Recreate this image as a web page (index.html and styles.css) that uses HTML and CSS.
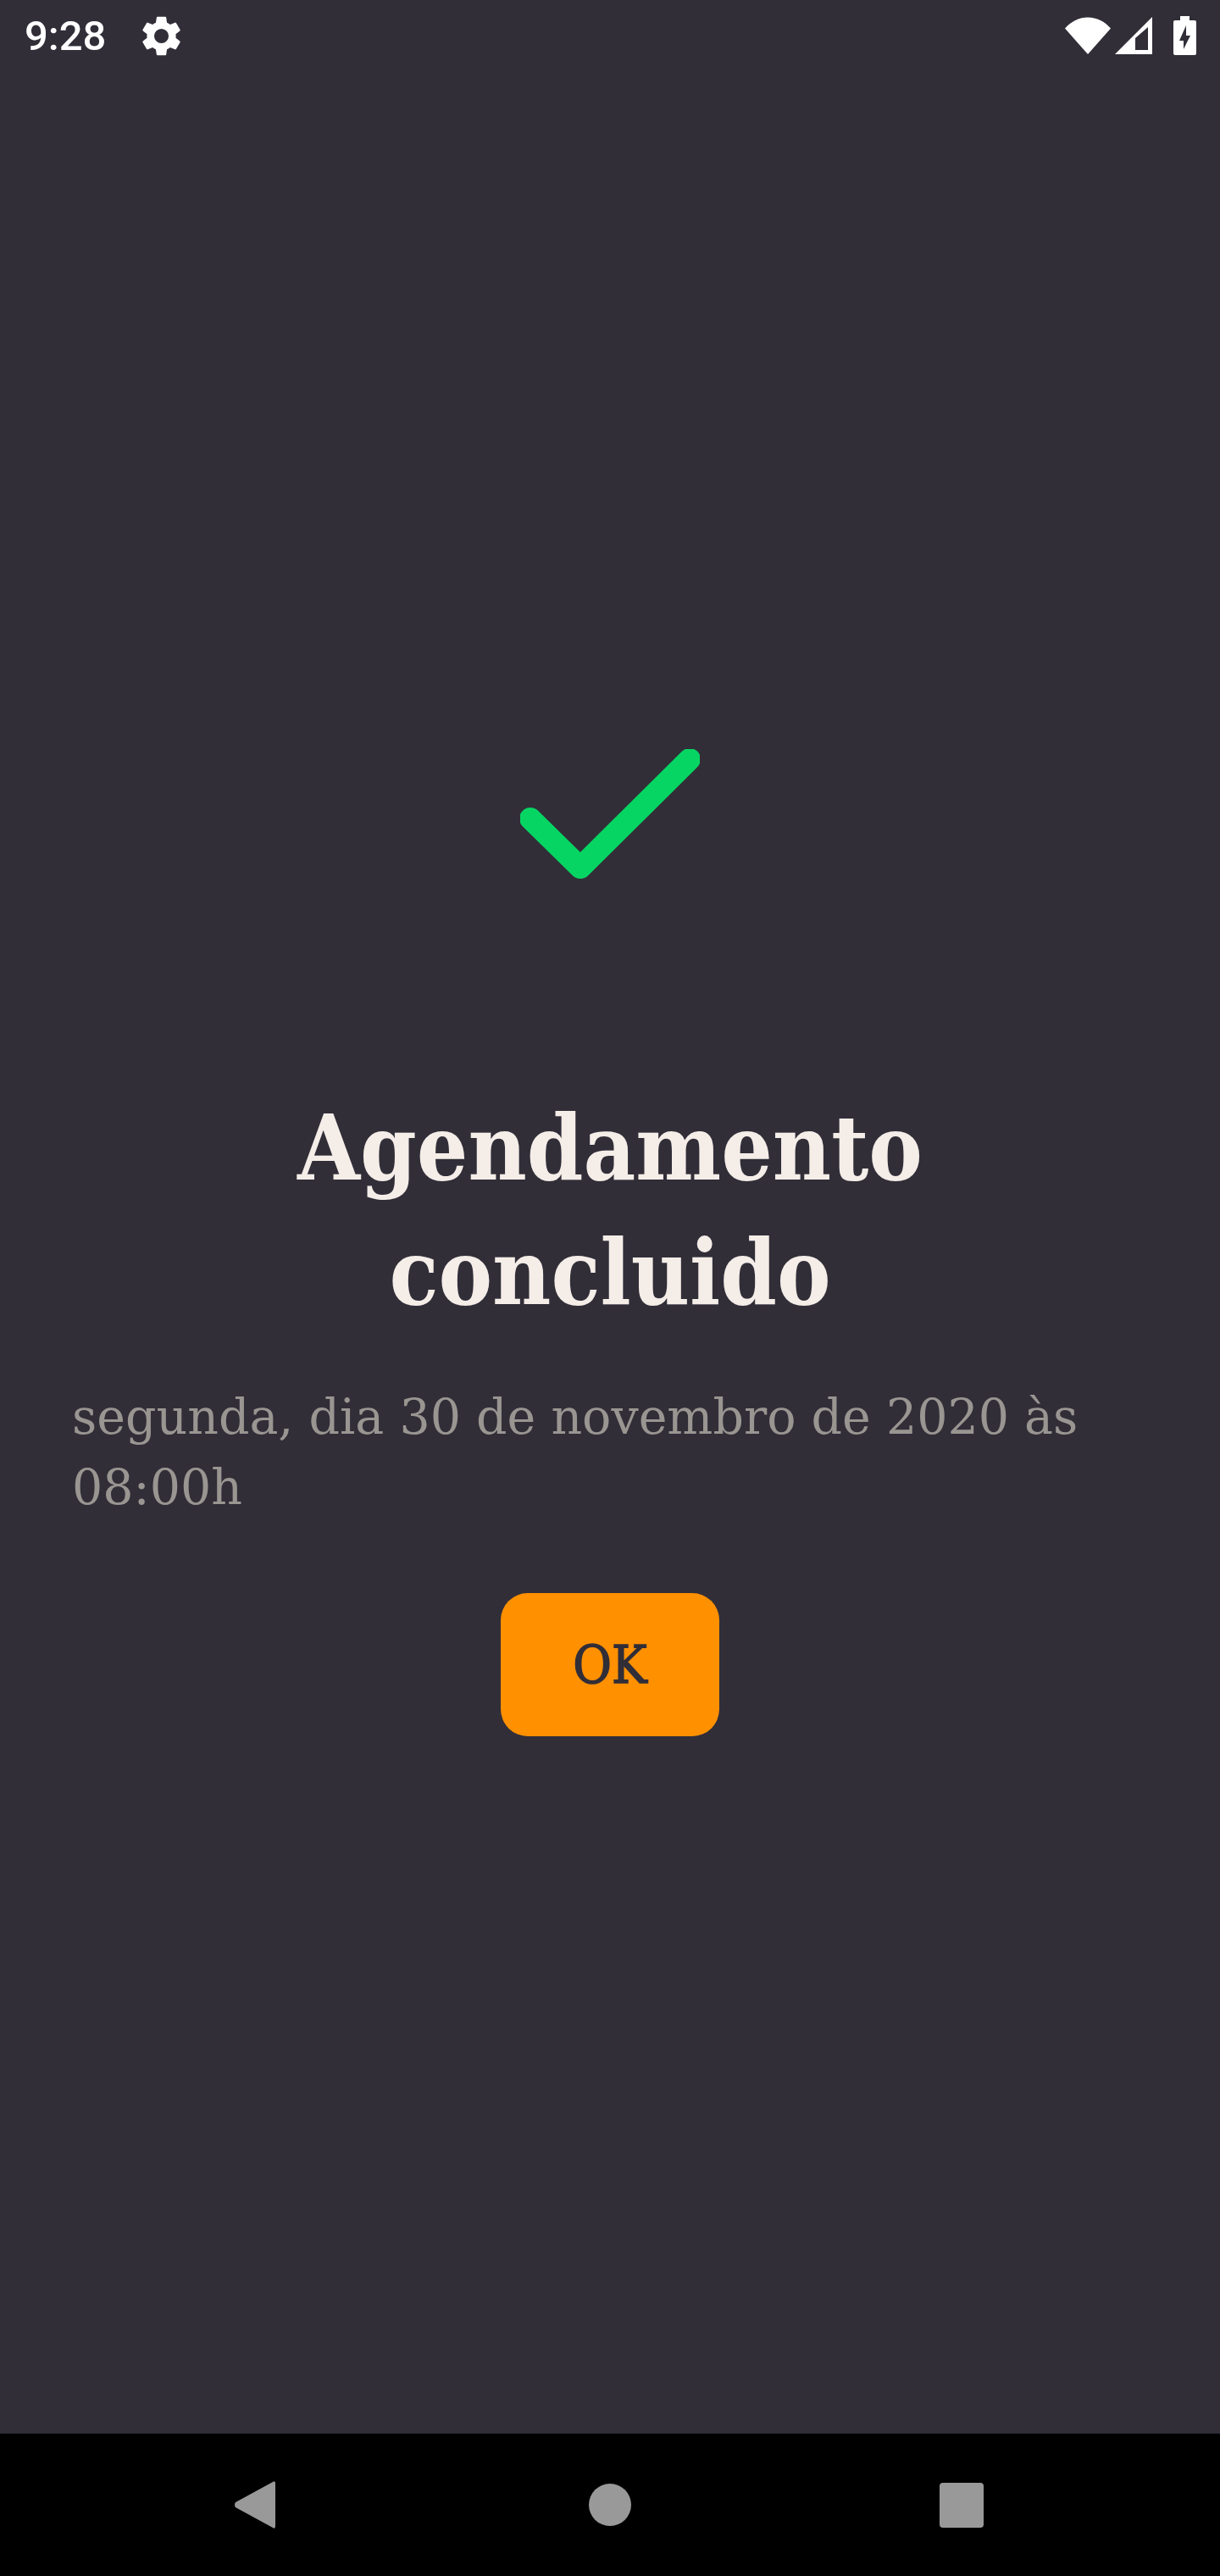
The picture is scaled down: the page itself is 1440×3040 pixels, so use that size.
FILE: index.html
```html
<!DOCTYPE html>
<html lang="pt-BR">
<head>
    <meta charset="UTF-8">
    <meta name="viewport" content="width=device-width, initial-scale=1.0">
    <title>Agendamento concluido</title>
    <link rel="stylesheet" href="styles.css">
</head>
<body>
    <div class="screen">
        <header class="status-bar">
            <div class="status-left">
                <span class="clock">9:28</span>
                <svg class="gear" viewBox="0 0 24 24"><path d="M19.14 12.94c.04-.3.06-.61.06-.94s-.02-.64-.07-.94l2.03-1.58a.49.49 0 0 0 .12-.61l-1.92-3.32a.49.49 0 0 0-.59-.22l-2.39.96a7 7 0 0 0-1.62-.94l-.36-2.54a.48.48 0 0 0-.48-.41h-3.84a.47.47 0 0 0-.47.41l-.36 2.54c-.59.24-1.13.57-1.62.94l-2.39-.96a.48.48 0 0 0-.59.22L2.74 8.87a.47.47 0 0 0 .12.61l2.03 1.58c-.05.3-.09.63-.09.94s.02.64.07.94l-2.03 1.58a.49.49 0 0 0-.12.61l1.92 3.32c.12.22.37.29.59.22l2.39-.96c.5.38 1.03.7 1.62.94l.36 2.54c.05.24.24.41.48.41h3.84c.24 0 .44-.17.47-.41l.36-2.54a6.9 6.9 0 0 0 1.62-.94l2.39.96c.22.08.47 0 .59-.22l1.92-3.32a.47.47 0 0 0-.12-.61zM12 15.6a3.6 3.6 0 1 1 0-7.2 3.6 3.6 0 0 1 0 7.2z"/></svg>
            </div>
            <div class="status-right">
                <svg class="wifi" viewBox="0 0 54 44"><path d="M0 13.500C7 5.500 16.500 0.500 27 0.500S47 5.500 54 13.500L27 44z"/></svg>
                <svg class="signal" viewBox="0 0 44 44"><path fill-rule="evenodd" d="M44 0V44H0zM39 12L24 25V39H39z"/></svg>
                <svg class="battery" viewBox="0 0 27 46"><path fill-rule="evenodd" d="M8 0H19V5H25Q27 5 27 7V44Q27 46 25 46H2Q0 46 0 44V7Q0 5 2 5H8zM15 11L7 29H12V39L20 23H15z"/></svg>
            </div>
        </header>

        <main class="content">
            <svg class="check" viewBox="0 0 212 154"><path d="M12 82L71 140L200 12"/></svg>
            <h1 class="title">Agendamento concluido</h1>
            <p class="when">segunda, dia 30 de novembro de 2020 às 08:00h</p>
            <button class="ok-button">OK</button>
        </main>

        <nav class="nav-bar">
            <svg class="nav-back" viewBox="0 0 49 56"><path d="M46 1Q49 -1 49 3V53Q49 57 46 55L2 31Q0 28 2 25z"/></svg>
            <span class="nav-home"></span>
            <span class="nav-recent"></span>
        </nav>
    </div>
</body>
</html>
```

FILE: styles.css
```css
html, body {
    margin: 0;
    padding: 0;
}
.screen {
    width: 1440px;
    height: 3040px;
    display: flex;
    flex-direction: column;
    background-color: #312e38;
}
.status-bar {
    height: 84px;
    display: flex;
    justify-content: space-between;
    align-items: center;
    padding: 0 28px 0 29px;
    flex-shrink: 0;
}
.status-left, .status-right {
    display: flex;
    align-items: center;
}
.clock {
    font-family: Roboto, sans-serif;
    font-size: 49px;
    font-weight: 500;
    color: #fff;
    line-height: 1;
}
.gear {
    width: 57px;
    height: 57px;
    margin-left: 37px;
    fill: #fff;
}
.wifi {
    width: 54px;
    height: 44px;
    fill: #fff;
}
.signal {
    width: 44px;
    height: 44px;
    margin-left: 5px;
    fill: #fff;
}
.battery {
    width: 27px;
    height: 46px;
    margin-left: 25px;
    fill: #fff;
}
.content {
    flex: 1;
    display: flex;
    flex-direction: column;
    align-items: center;
    padding: 0 85px;
}
.check {
    width: 212px;
    height: 154px;
    margin-top: 800px;
    fill: none;
    stroke: #07d563;
    stroke-width: 26px;
    stroke-linecap: round;
    stroke-linejoin: round;
}
.title {
    margin: 243px 0 0;
    width: 800px;
    text-align: center;
    font-family: "DejaVu Serif Condensed", "DejaVu Serif", serif;
    font-weight: 700;
    font-size: 106px;
    line-height: 147px;
    color: #f4ede8;
}
.when {
    margin: 56px 0 0;
    align-self: stretch;
    font-family: "DejaVu Serif", serif;
    font-size: 57px;
    line-height: 83px;
    color: #999591;
}
.ok-button {
    margin-top: 83px;
    width: 258px;
    height: 169px;
    border: none;
    border-radius: 32px;
    background-color: #ff9000;
    font-family: "DejaVu Serif Condensed", "DejaVu Serif", serif;
    font-size: 62px;
    -webkit-text-stroke: 1.5px #312e38;
    color: #312e38;
}
.nav-bar {
    height: 168px;
    flex-shrink: 0;
    background-color: #000;
    display: flex;
    align-items: center;
    padding-left: 276px;
}
.nav-back {
    width: 49px;
    height: 56px;
    fill: #999;
}
.nav-home {
    width: 50px;
    height: 50px;
    margin-left: 370px;
    border-radius: 50%;
    background-color: #999;
}
.nav-recent {
    width: 52px;
    height: 53px;
    margin-left: 364px;
    border-radius: 4px;
    background-color: #999;
}
```
